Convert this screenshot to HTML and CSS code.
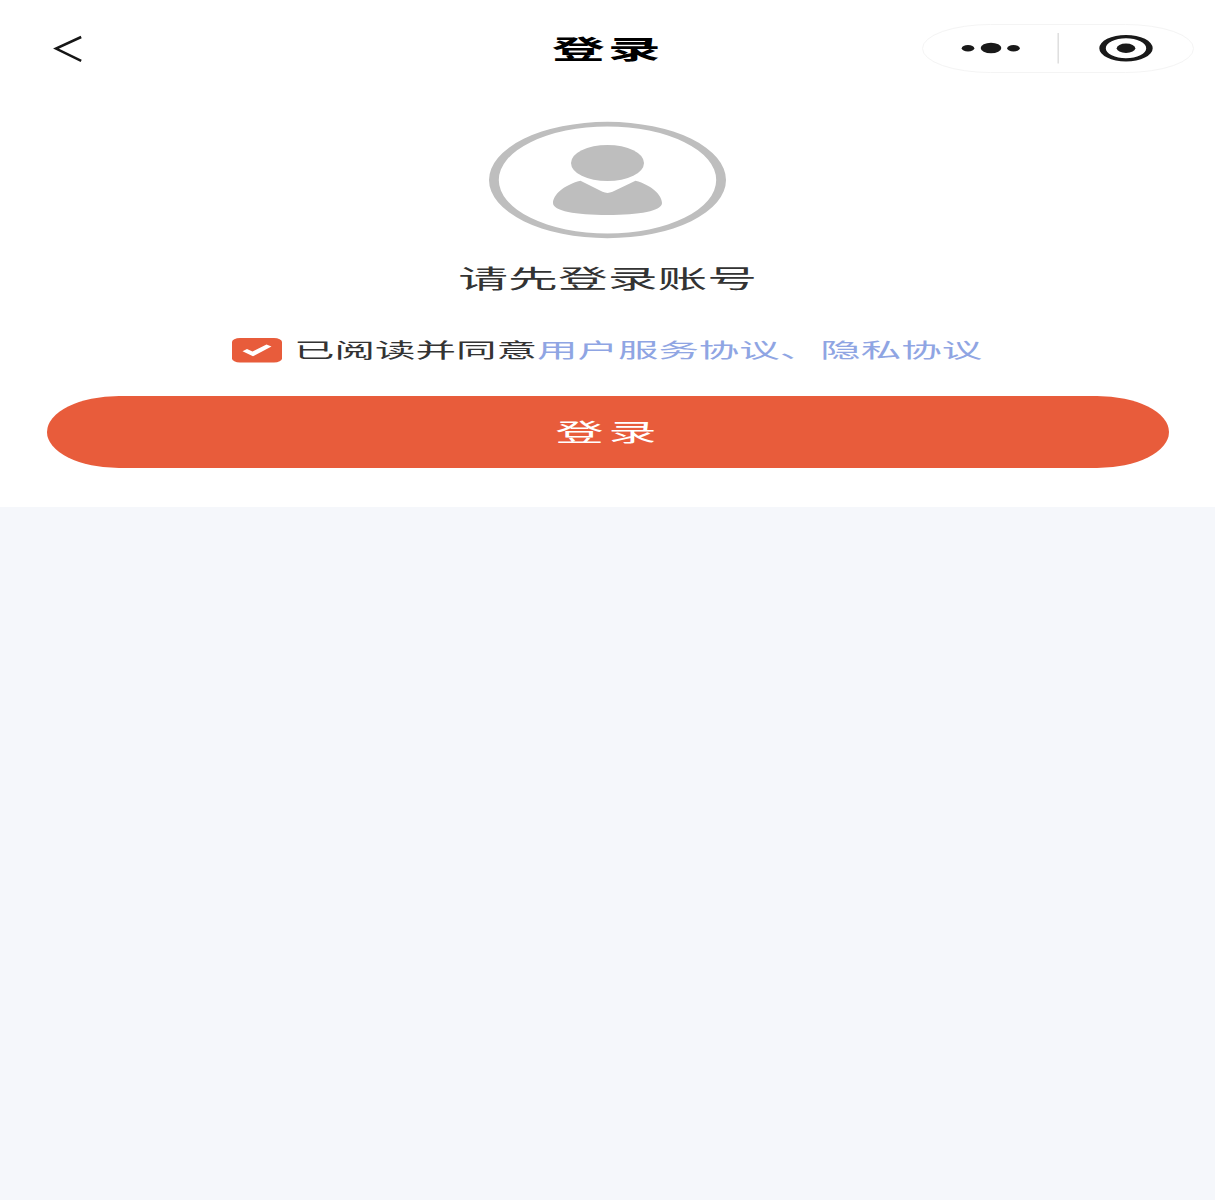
FILE: index.html
```html
<!DOCTYPE html>
<html lang="zh-CN">
<head>
<meta charset="utf-8">
<title>登录</title>
<link rel="stylesheet" href="styles.css">
</head>
<body>
<main class="panel">
  <header class="nav">
    <svg class="back" width="36" height="36" viewBox="0 0 36 36"><path d="M33.200 6L8 17.600l25.200 12.200" fill="none" stroke="#161616" stroke-width="2.500"/></svg>
    <h1 class="title"><span class="wide">登录</span></h1>
    <div class="capsule">
      <svg width="272" height="49" viewBox="0 0 272 49">
        <rect x=".5" y=".5" width="271" height="48" rx="68" ry="24" fill="#fff" stroke="#f4f4f4"/>
        <g fill="#191919"><ellipse cx="46" cy="24.300" rx="6.300" ry="3.200"/><ellipse cx="69" cy="24" rx="10.300" ry="5.200"/><ellipse cx="91.500" cy="24.300" rx="6.300" ry="3.200"/><ellipse cx="204" cy="24.200" rx="9.300" ry="4.700"/></g>
        <path d="M136.200 9v30.500" stroke="#dedede" stroke-width="1.500"/>
        <path fill="#191919" fill-rule="evenodd" d="M177.300 24.200a26.700 13.200 0 1 0 53.400 0a26.700 13.200 0 1 0-53.400 0zM183.800 24.200a20.200 10 0 1 1 40.400 0a20.200 10 0 1 1-40.400 0z"/>
      </svg>
    </div>
  </header>
  <svg class="avatar" width="239" height="118" viewBox="0 0 239 118" fill="#bebebe">
    <path fill-rule="evenodd" d="M1 59a118.500 58.200 0 1 0 237 0a118.500 58.200 0 1 0-237 0zM10.800 59a108.700 53.500 0 1 1 217.400 0a108.700 53.500 0 1 1-217.400 0z"/>
    <ellipse cx="119.500" cy="42" rx="36.500" ry="18"/>
    <path d="M92.500 59.700C75.500 64 65 74 65 82C65 90 87.500 94 119.500 94S174 90 174 82C174 74 163.500 64 147.500 59.700L124.500 70.800Q119.500 73 114.500 70.800Z"/>
  </svg>
  <p class="hint"><span class="wide">请先登录账号</span></p>
  <div class="agree">
    <svg class="check" width="50" height="25" viewBox="0 0 50 25"><rect width="50" height="24.500" rx="8" ry="4" fill="#e85c3b"/><path d="M10.500 13.300L15 10.900L20.500 13.400L34.500 6.600L39.500 8.500L21 18.300Z" fill="#fff"/></svg>
    <p class="terms"><span class="wide">已阅读并同意<a class="link">用户服务协议、隐私协议</a></span></p>
  </div>
  <button class="login"><span class="wide">登录</span></button>
</main>
</body>
</html>
```
FILE: styles.css
```css
* { box-sizing: border-box; }
body {
  margin: 0;
  min-height: 1200px;
  background: #f5f7fb;
  font-family: "Noto Sans CJK SC", sans-serif;
}
h1, p { margin: 0; }
.panel {
  height: 507px;
  background: #fff;
  display: flex;
  flex-direction: column;
  align-items: center;
}
.nav {
  width: 100%;
  height: 97px;
  padding: 0 21px 0 48px;
  display: grid;
  grid-template-columns: 272px 1fr 272px;
  align-items: center;
}
.wide {
  display: inline-block;
  white-space: nowrap;
  transform: scaleX(2);
}
.title {
  text-align: center;
  font-size: 26.3px;
  line-height: 40px;
  font-weight: 700;
  letter-spacing: 1.8px;
  color: #000;
  padding: 0 26px 2px 0;
}
.back, .capsule svg, .avatar, .check { display: block; }
.avatar { margin-top: 24px; }
.hint {
  margin-top: 18px;
  font-size: 24.9px;
  line-height: 40px;
  color: #333;
}
.agree {
  width: 751px;
  height: 30px;
  margin-top: 38px;
  display: flex;
  align-items: center;
  gap: 12px;
}
.terms {
  width: 689px;
  font-size: 20.15px;
  line-height: 30px;
  color: #333;
}
.terms .wide {
  transform: scaleX(2.01);
  transform-origin: left center;
}
.link { color: #8fa5e3; }
.login {
  width: 1122px;
  height: 72px;
  margin-top: 31px;
  padding: 0 0 3px 2px;
  border: 0;
  border-radius: 72px / 36px;
  background: #e85c3b;
  color: #fff;
  font: 400 24px/40px "Noto Sans CJK SC", sans-serif;
  letter-spacing: 2.5px;
}
```
